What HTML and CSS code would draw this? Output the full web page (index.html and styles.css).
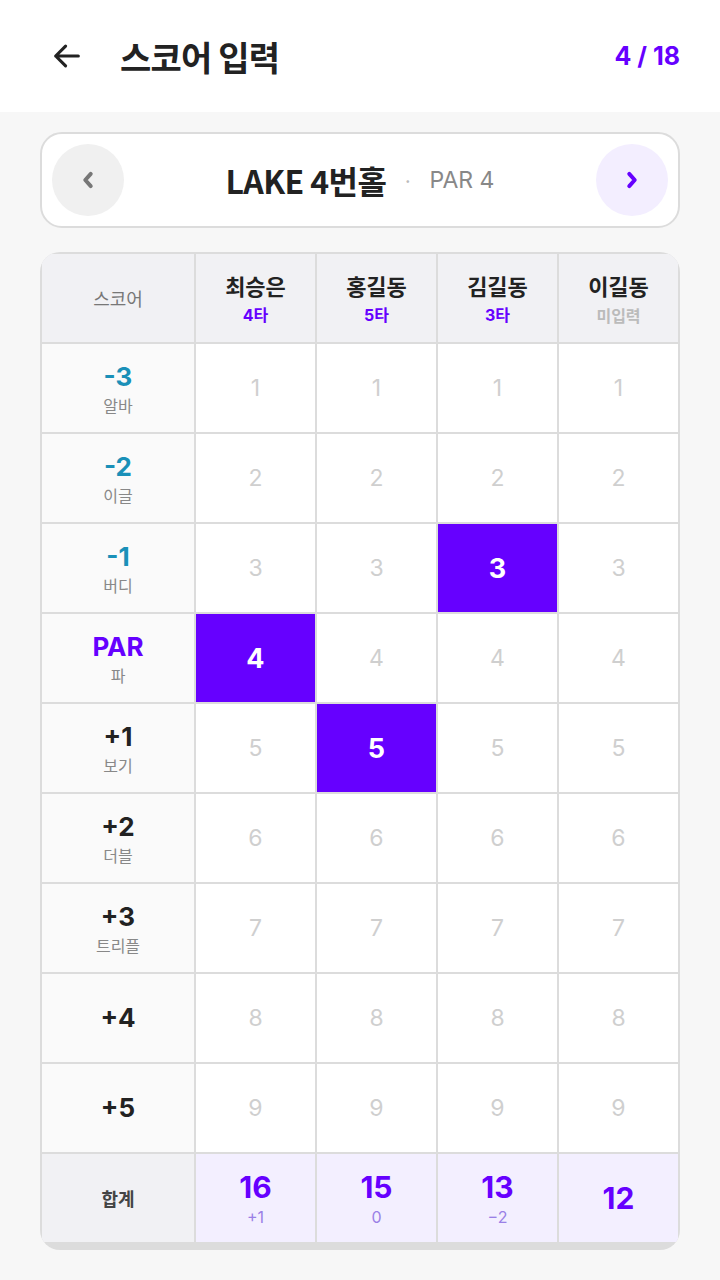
FILE: index.html
```html
<!DOCTYPE HTML>
<html>
<head>
	<title>스코어 입력</title>
	<link rel="stylesheet" href="styles.css">
</head>
<body>
	<div class="topbar">
		<div class="back">
			<svg width="34" height="34" viewBox="0 0 24 24"><path d="M20 12H4M11 5l-7 7 7 7" fill="none" stroke="#222" stroke-width="2.2" stroke-linecap="round" stroke-linejoin="round"/></svg>
		</div>
		<h1 class="title">스코어 입력</h1>
		<div class="progress">4 / 18</div>
	</div>
	<div class="content">
		<div class="hole">
			<div class="nav prev">
				<svg width="22" height="22" viewBox="0 0 20 20"><path d="M12.5 4.5l-5 5.5 5 5.5" fill="none" stroke="#777" stroke-width="3.6" stroke-linecap="round" stroke-linejoin="round"/></svg>
			</div>
			<div class="hole-info">
				<span class="hole-name">LAKE 4번홀</span>
				<span class="dot">·</span>
				<span class="hole-par">PAR 4</span>
			</div>
			<div class="nav next">
				<svg width="22" height="22" viewBox="0 0 20 20"><path d="M7.5 4.5l5 5.5-5 5.5" fill="none" stroke="#6600ff" stroke-width="3.6" stroke-linecap="round" stroke-linejoin="round"/></svg>
			</div>
		</div>

		<div class="board">
			<div class="cell head label-head">스코어</div>
			<div class="cell head"><b>최승은</b><span class="strokes">4타</span></div>
			<div class="cell head"><b>홍길동</b><span class="strokes">5타</span></div>
			<div class="cell head"><b>김길동</b><span class="strokes">3타</span></div>
			<div class="cell head"><b>이길동</b><span class="strokes empty">미입력</span></div>

			<div class="cell label"><b class="under">-3</b><span>알바</span></div>
			<div class="cell num">1</div><div class="cell num">1</div><div class="cell num">1</div><div class="cell num">1</div>

			<div class="cell label"><b class="under">-2</b><span>이글</span></div>
			<div class="cell num">2</div><div class="cell num">2</div><div class="cell num">2</div><div class="cell num">2</div>

			<div class="cell label"><b class="under">-1</b><span>버디</span></div>
			<div class="cell num">3</div><div class="cell num">3</div><div class="cell num on">3</div><div class="cell num">3</div>

			<div class="cell label"><b class="par">PAR</b><span>파</span></div>
			<div class="cell num on">4</div><div class="cell num">4</div><div class="cell num">4</div><div class="cell num">4</div>

			<div class="cell label"><b>+1</b><span>보기</span></div>
			<div class="cell num">5</div><div class="cell num on">5</div><div class="cell num">5</div><div class="cell num">5</div>

			<div class="cell label"><b>+2</b><span>더블</span></div>
			<div class="cell num">6</div><div class="cell num">6</div><div class="cell num">6</div><div class="cell num">6</div>

			<div class="cell label"><b>+3</b><span>트리플</span></div>
			<div class="cell num">7</div><div class="cell num">7</div><div class="cell num">7</div><div class="cell num">7</div>

			<div class="cell label"><b>+4</b></div>
			<div class="cell num">8</div><div class="cell num">8</div><div class="cell num">8</div><div class="cell num">8</div>

			<div class="cell label"><b>+5</b></div>
			<div class="cell num">9</div><div class="cell num">9</div><div class="cell num">9</div><div class="cell num">9</div>

			<div class="cell total-head">합계</div>
			<div class="cell total"><b>16</b><span>+1</span></div>
			<div class="cell total"><b>15</b><span>0</span></div>
			<div class="cell total"><b>13</b><span>−2</span></div>
			<div class="cell total"><b>12</b></div>
		</div>
	</div>
</body>
</html>
```

FILE: styles.css
```css
*, *::after, *::before{
	box-sizing: border-box;
	margin: 0;
	padding: 0;
}
html, body{
	width: 100%;
	height: 100%;
}
body{
	background-color: #f7f7f7;
	font-family: "Noto Sans CJK KR", "Noto Sans", sans-serif;
	color: #222;
}
.topbar{
	display: flex;
	align-items: center;
	height: 112px;
	padding: 0 40px 0 50px;
	background-color: #fff;
}
.back{
	display: flex;
	width: 36px;
	margin-right: 34px;
}
.title{
	flex: 1;
	font-size: 34px;
	font-weight: 700;
	letter-spacing: -0.8px;
}
.progress{
	font-family: Inter, "Noto Sans CJK KR", sans-serif;
	font-size: 25px;
	font-weight: 700;
	color: #6600ff;
}
.content{
	padding: 20px 40px;
}
.hole{
	display: flex;
	align-items: center;
	justify-content: space-between;
	height: 96px;
	padding: 0 10px;
	background-color: #fff;
	border: 2px solid #dcdcdc;
	border-radius: 22px;
}
.nav{
	display: flex;
	align-items: center;
	justify-content: center;
	width: 72px;
	height: 72px;
	border-radius: 50%;
}
.prev{background-color: #f0f0f0;}
.next{background-color: #f3eeff;}
.hole-info{
	display: flex;
	align-items: center;
	gap: 16px;
}
.hole-name{
	font-size: 32px;
	font-weight: 700;
	letter-spacing: -0.6px;
}
.dot{
	color: #bbb;
	font-size: 20px;
}
.hole-par{
	font-family: Inter, sans-serif;
	font-size: 23px;
	color: #888;
}
.board{
	display: grid;
	grid-template-columns: 152px repeat(4, 1fr);
	grid-auto-rows: 88px;
	gap: 2px;
	margin-top: 24px;
	padding: 2px 2px 8px;
	background-color: #dcdcdc;
	border-radius: 20px;
	overflow: hidden;
}
.cell{
	display: flex;
	flex-direction: column;
	align-items: center;
	justify-content: center;
	background-color: #fff;
}
.head{
	background-color: #f1f1f4;
}
.head b{
	font-size: 22px;
	font-weight: 700;
	line-height: 32px;
	margin-bottom: 2px;
}
.label-head{
	font-size: 18px;
	color: #777;
}
.strokes{
	font-family: Inter, "Noto Sans CJK KR", sans-serif;
	font-size: 16px;
	font-weight: 700;
	line-height: 24px;
	color: #6600ff;
}
.strokes.empty{
	font-family: "Noto Sans CJK KR", sans-serif;
	color: #bbb;
}
.label{
	background-color: #fafafa;
}
.label b{
	font-family: Inter, sans-serif;
	font-size: 26px;
	font-weight: 700;
	line-height: 34px;
	color: #222;
}
.label b.under{color: #1a90b8;}
.label b.par{color: #6600ff;}
.label span{
	font-size: 16px;
	line-height: 22px;
	color: #888;
}
.num{
	font-family: Inter, sans-serif;
	font-size: 23px;
	color: #cfcfcf;
}
.num.on{
	background-color: #6600ff;
	color: #fff;
	font-size: 27px;
	font-weight: 700;
}
.total-head{
	background-color: #f1f1f4;
	font-size: 18px;
	font-weight: 700;
	color: #444;
}
.total{
	background-color: #f3efff;
	font-family: Inter, sans-serif;
}
.total b{
	font-size: 30px;
	font-weight: 700;
	line-height: 38px;
	color: #6600ff;
}
.total span{
	font-size: 16px;
	line-height: 22px;
	color: #9a80e6;
}
```
